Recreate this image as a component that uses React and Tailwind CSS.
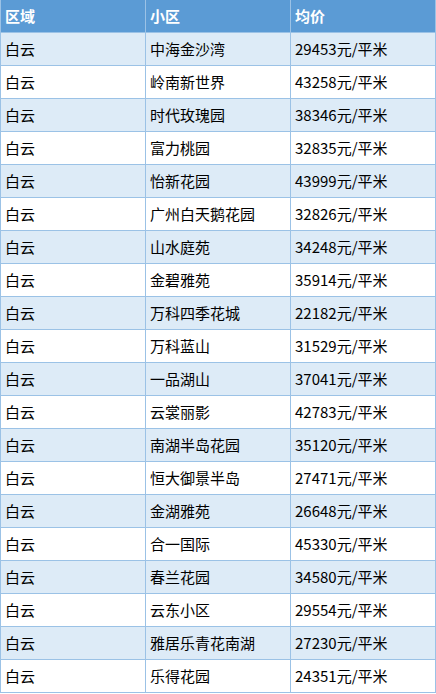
const rows = [
    ['白云', '中海金沙湾', '29453元/平米'],
    ['白云', '岭南新世界', '43258元/平米'],
    ['白云', '时代玫瑰园', '38346元/平米'],
    ['白云', '富力桃园', '32835元/平米'],
    ['白云', '怡新花园', '43999元/平米'],
    ['白云', '广州白天鹅花园', '32826元/平米'],
    ['白云', '山水庭苑', '34248元/平米'],
    ['白云', '金碧雅苑', '35914元/平米'],
    ['白云', '万科四季花城', '22182元/平米'],
    ['白云', '万科蓝山', '31529元/平米'],
    ['白云', '一品湖山', '37041元/平米'],
    ['白云', '云裳丽影', '42783元/平米'],
    ['白云', '南湖半岛花园', '35120元/平米'],
    ['白云', '恒大御景半岛', '27471元/平米'],
    ['白云', '金湖雅苑', '26648元/平米'],
    ['白云', '合一国际', '45330元/平米'],
    ['白云', '春兰花园', '34580元/平米'],
    ['白云', '云东小区', '29554元/平米'],
    ['白云', '雅居乐青花南湖', '27230元/平米'],
    ['白云', '乐得花园', '24351元/平米'],
];

const cell = 'flex w-[145px] shrink-0 items-center border-r border-[#9bc2e6] pl-[4px]';

export default function App() {
    return (
        <div
            className="w-[436px] bg-white text-[15px] text-black"
            style={{ fontFamily: '"Noto Sans CJK SC", "Liberation Sans", sans-serif' }}
        >
            <div className="flex h-[33px] border-b border-l border-[#9bc2e6] bg-[#5b9bd5] font-bold text-white">
                <div className={cell}>区域</div>
                <div className={cell}>小区</div>
                <div className={cell}>均价</div>
            </div>
            {rows.map((r, i) => (
                <div
                    key={r[1]}
                    className={`flex h-[33px] border-b border-l border-[#9bc2e6] ${
                        i % 2 === 0 ? 'bg-[#ddebf7]' : 'bg-white'
                    }`}
                >
                    <div className={cell}>{r[0]}</div>
                    <div className={cell}>{r[1]}</div>
                    <div className={cell}>{r[2]}</div>
                </div>
            ))}
        </div>
    );
}
